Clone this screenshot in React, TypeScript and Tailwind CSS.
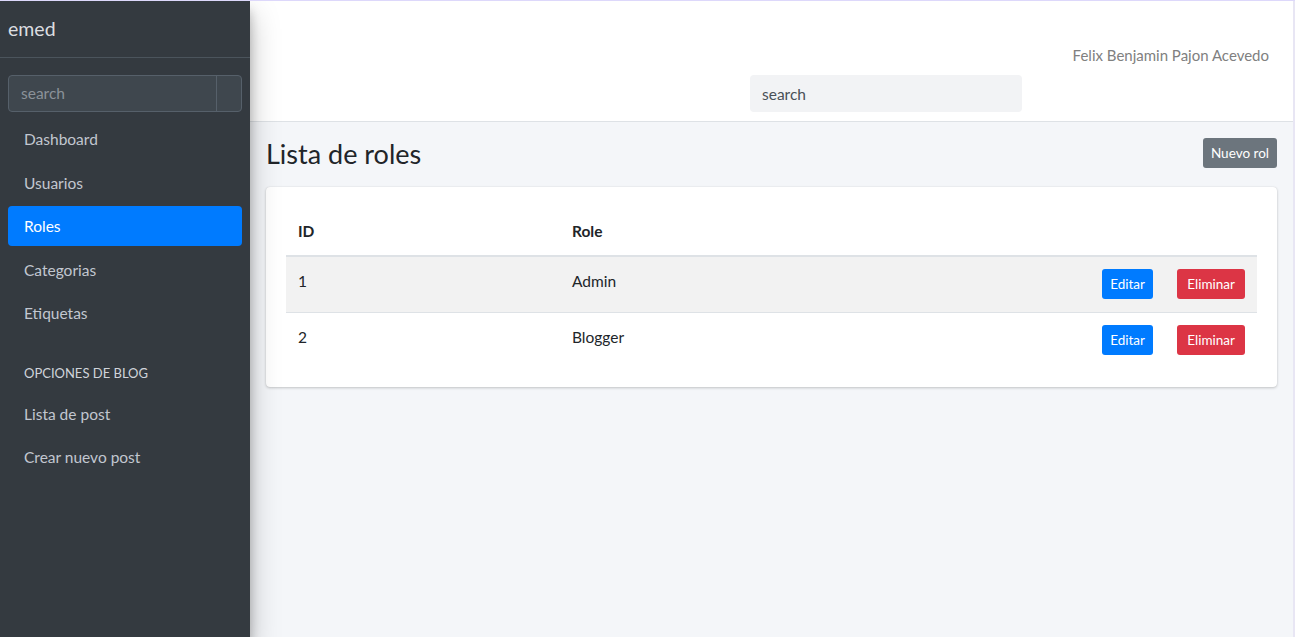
import React from "react";

const navItems = ["Dashboard", "Usuarios", "Roles", "Categorias", "Etiquetas"];
const blogItems = ["Lista de post", "Crear nuevo post"];

const roles = [
  { id: 1, name: "Admin" },
  { id: 2, name: "Blogger" },
];

const font = "font-['Source_Sans_Pro','Lato','Liberation_Sans',sans-serif]";

const Sidebar = () => (
  <aside className="relative z-10 flex w-[250px] shrink-0 flex-col bg-[#343a40] shadow-[0_14px_28px_rgba(0,0,0,0.25),0_10px_10px_rgba(0,0,0,0.22)]">
    <div className="flex h-[57px] items-center border-b border-[#4b545c] px-2 text-[19.5px] text-[#dcdee0]">
      emed
    </div>
    <div className="mx-2 mt-[17px] flex h-[37px] rounded border border-[#56606a] bg-[#3f474e]">
      <input
        className="min-w-0 flex-1 bg-transparent px-3 text-[15.5px] text-white outline-none placeholder:text-[#8b9299]"
        placeholder="search"
      />
      <div className="w-[25px] border-l border-[#56606a]" />
    </div>
    <nav className="mt-[7px] px-2">
      {navItems.map((item) => (
        <div
          key={item}
          className={`mb-[3.5px] flex h-10 items-center rounded px-4 pt-[2px] text-[15.5px] ${
            item === "Roles" ? "bg-[#007bff] text-white" : "text-[#c2c7d0]"
          }`}
        >
          {item}
        </div>
      ))}
      <div className="px-4 pt-[27px] pb-[12px] text-[13px] leading-[18px] text-[#d0d4db]">OPCIONES DE BLOG</div>
      {blogItems.map((item) => (
        <div key={item} className="mb-[3.5px] flex h-10 items-center rounded px-4 pt-[2px] text-[15.5px] text-[#c2c7d0]">
          {item}
        </div>
      ))}
    </nav>
  </aside>
);

const Navbar = () => (
  <header className="flex h-[121px] shrink-0 flex-col border-b border-[#dee2e6] bg-white">
    <div className="flex justify-end pt-[43px] pr-[24px] text-[15px] leading-[22px] text-[#808080]">
      Felix Benjamin Pajon Acevedo
    </div>
    <div className="mt-[9px] pl-[500px]">
      <input
        className="h-[37px] w-[272px] rounded bg-[#f2f3f5] px-3 text-[15.5px] text-[#495057] outline-none placeholder:text-[#495057]"
        placeholder="search"
      />
    </div>
  </header>
);

const RolesTable = () => (
  <div className="rounded bg-white p-5 shadow-[0_0_1px_rgba(0,0,0,0.125),0_1px_3px_rgba(0,0,0,0.2)]">
    <div className="grid grid-cols-[274px_1fr_76px_92px] border-b-2 border-[#dee2e6] text-[15.5px] font-bold leading-6 text-[#212529]">
      <div className="p-3">ID</div>
      <div className="p-3">Role</div>
      <div />
      <div />
    </div>
    {roles.map((role, i) => (
      <div
        key={role.id}
        className={`grid h-[55px] grid-cols-[274px_1fr_76px_92px] text-[15.5px] leading-6 text-[#212529] ${
          i > 0 ? "border-t border-[#dee2e6]" : ""
        } ${i % 2 === 0 ? "bg-[#f2f2f2]" : ""}`}
      >
        <div className="p-3">{role.id}</div>
        <div className="p-3">{role.name}</div>
        <div className="flex items-start justify-end p-3">
          <button className="h-[30px] rounded-[3px] bg-[#007bff] px-2 text-[13.5px] text-white">Editar</button>
        </div>
        <div className="flex items-start justify-end p-3">
          <button className="h-[30px] rounded-[3px] bg-[#dc3545] px-[10px] text-[13.5px] text-white">Eliminar</button>
        </div>
      </div>
    ))}
  </div>
);

export default function App() {
  return (
    <div className={`flex h-[637px] overflow-hidden border-t border-[#ddd8fb] ${font}`}>
      <Sidebar />
      <main className="flex flex-1 flex-col border-r-2 border-[#e8e6f4] bg-[#f4f6f9]">
        <Navbar />
        <section className="px-4 pt-[15px]">
          <div className="flex items-start justify-between">
            <h1 className="text-[27px] leading-[34px] text-[#212529]">Lista de roles</h1>
            <button className="mt-[1px] h-[30px] rounded-[3px] bg-[#6c757d] px-2 text-[13.5px] text-white">Nuevo rol</button>
          </div>
          <div className="mt-[16px]">
            <RolesTable />
          </div>
        </section>
      </main>
    </div>
  );
}
